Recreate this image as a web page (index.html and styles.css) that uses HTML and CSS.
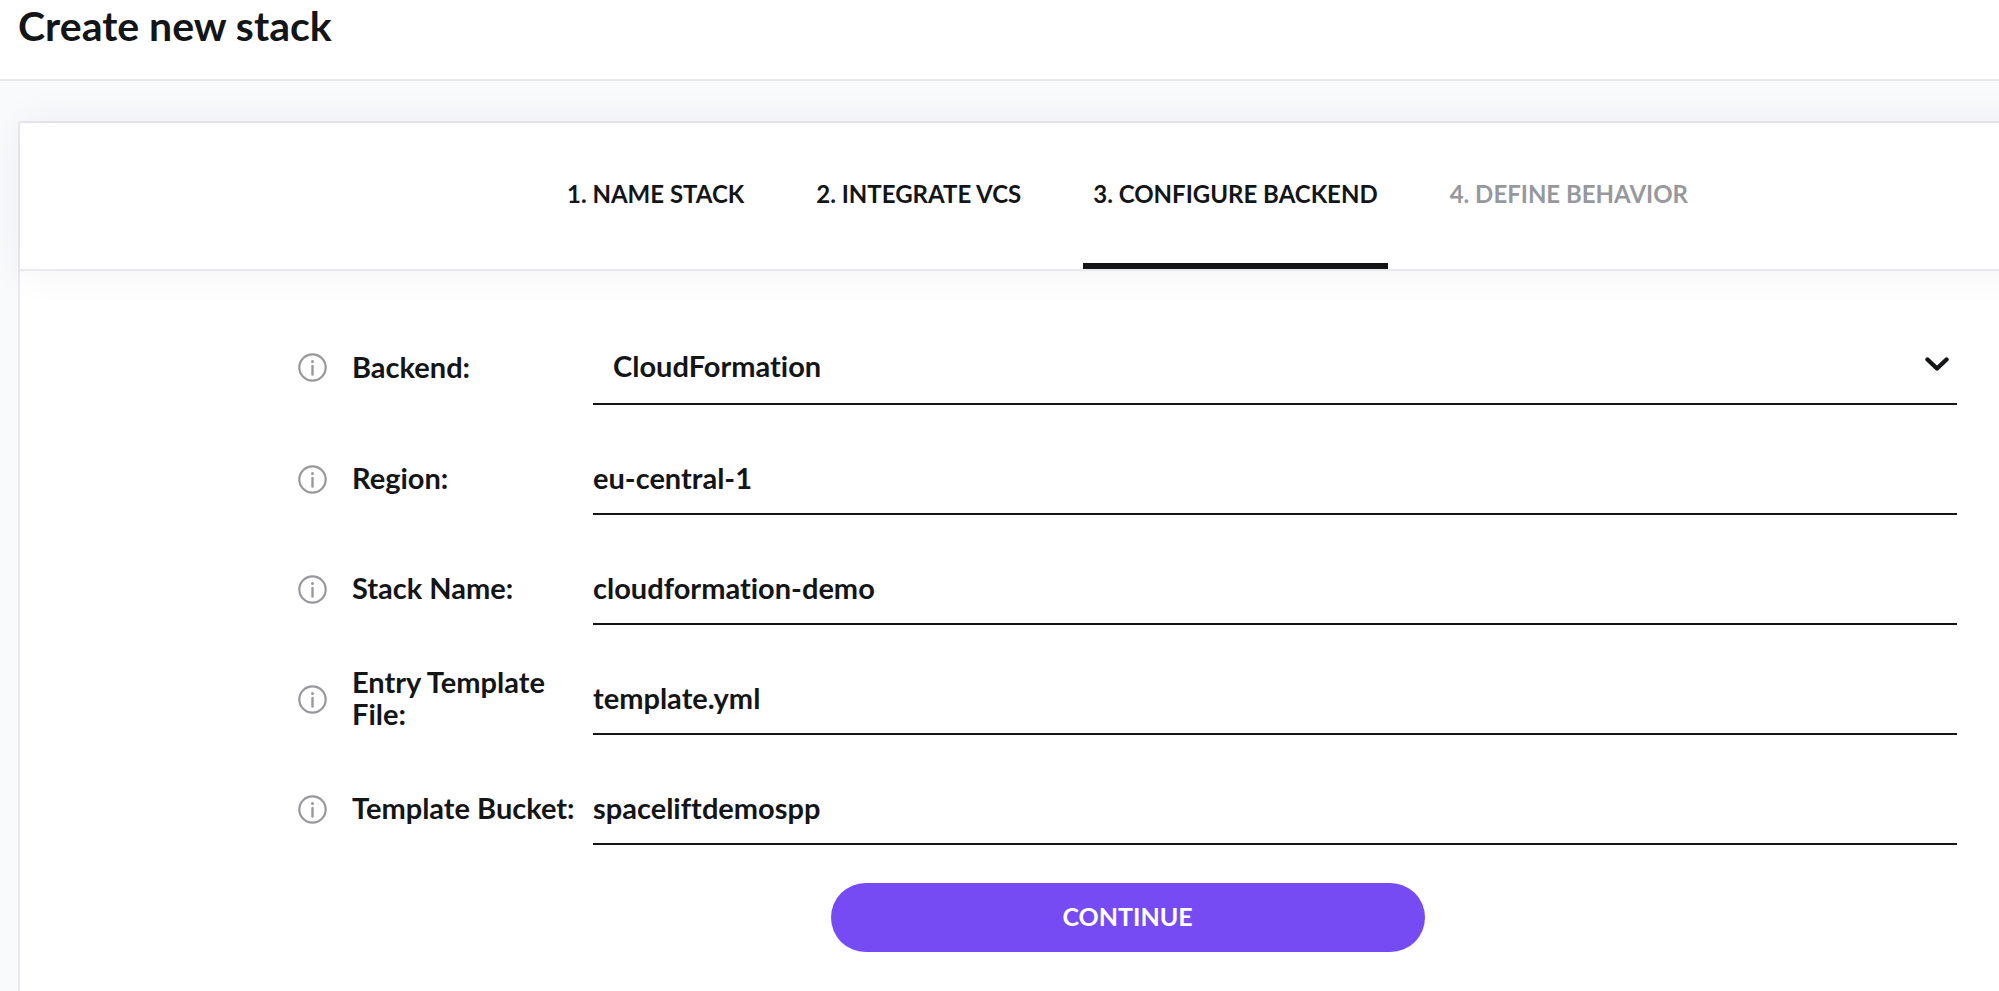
FILE: index.html
```html
<!DOCTYPE html>
<html lang="en">
<head>
  <meta charset="UTF-8">
  <meta name="viewport" content="width=device-width, initial-scale=1.0">
  <title>Create new stack</title>
  <link rel="stylesheet" href="styles.css">
</head>
<body>
  <svg class="sprite" aria-hidden="true">
    <symbol id="icon-info" viewBox="0 0 29 29">
      <circle cx="14.5" cy="14.5" r="13.2" fill="none" stroke="currentColor" stroke-width="2.2"/>
      <circle cx="14.5" cy="8.5" r="1.5" fill="currentColor"/>
      <path d="M14.5 13v8.5" stroke="currentColor" stroke-width="2.4" stroke-linecap="round"/>
    </symbol>
  </svg>
  <header class="page-header">
    <h1>Create new stack</h1>
  </header>
  <main class="card">
    <nav class="steps">
      <a class="step" href="#name">1. NAME STACK</a>
      <a class="step" href="#vcs">2. INTEGRATE VCS</a>
      <a class="step active" href="#backend" aria-current="step">3. CONFIGURE BACKEND</a>
      <a class="step disabled" href="#behavior">4. DEFINE BEHAVIOR</a>
    </nav>
    <form class="stack-form">
      <div class="row">
        <div class="row-label">
          <svg class="info"><use href="#icon-info"/></svg>
          <label for="vendor">Backend:</label>
        </div>
        <div class="select">
          <select id="vendor">
            <option>CloudFormation</option>
            <option>Terraform</option>
            <option>Pulumi</option>
          </select>
          <svg class="chevron" viewBox="0 0 24 14"><path d="M2.5 2.5L12 11.5L21.5 2.5" fill="none" stroke="currentColor" stroke-width="4.4" stroke-linecap="round" stroke-linejoin="round"/></svg>
        </div>
      </div>
      <div class="row">
        <div class="row-label">
          <svg class="info"><use href="#icon-info"/></svg>
          <label for="region">Region:</label>
        </div>
        <input type="text" id="region" value="eu-central-1">
      </div>
      <div class="row">
        <div class="row-label">
          <svg class="info"><use href="#icon-info"/></svg>
          <label for="stack-name">Stack Name:</label>
        </div>
        <input type="text" id="stack-name" value="cloudformation-demo">
      </div>
      <div class="row">
        <div class="row-label">
          <svg class="info"><use href="#icon-info"/></svg>
          <label for="template-file">Entry Template File:</label>
        </div>
        <input type="text" id="template-file" value="template.yml">
      </div>
      <div class="row">
        <div class="row-label">
          <svg class="info"><use href="#icon-info"/></svg>
          <label for="bucket">Template Bucket:</label>
        </div>
        <input type="text" id="bucket" value="spaceliftdemospp">
      </div>
      <button type="button" class="continue">CONTINUE</button>
    </form>
  </main>
</body>
</html>
```
FILE: styles.css
```css
* {
  box-sizing: border-box;
}
body {
  margin: 0;
  min-height: 100vh;
  display: flex;
  flex-direction: column;
  overflow-x: hidden;
  background: #f9fafc;
  color: #131517;
  font-family: Lato, "Open Sans", sans-serif;
  font-weight: 700;
  font-variant-ligatures: none;
}
.sprite {
  display: none;
}
.page-header {
  position: relative;
  z-index: 1;
  padding: 0 18px 27px;
  background: #fff;
  border-bottom: 2px solid #e8e8eb;
}
.page-header h1 {
  margin: 0;
  font-size: 41px;
  line-height: 52px;
}
/* the card runs out under the right edge of the window */
.card {
  flex: 1;
  margin: 40px -40px 0 18px;
  background: #fff;
  border: 2px solid #e8e8ed;
  border-bottom: 0;
  border-top-left-radius: 4px;
}
.steps {
  display: flex;
  justify-content: center;
  gap: 52px;
  padding: 0 80px 0 278px;
  border-bottom: 2px solid #e8e8ed;
  box-shadow: 0 0 40px rgba(31, 34, 71, 0.06);
}
.step {
  padding: 55px 10px 53px;
  border-bottom: 6px solid transparent;
  color: inherit;
  font-size: 24px;
  line-height: 32px;
  text-decoration: none;
  white-space: nowrap;
}
.step.active {
  border-bottom-color: #131517;
}
.step.disabled {
  color: #97989d;
}
.stack-form {
  display: flex;
  flex-direction: column;
  gap: 38px;
  padding: 59px 80px 38px 278px;
}
.row {
  display: flex;
  align-items: center;
}
.row-label {
  flex: 0 0 295px;
  display: flex;
  align-items: center;
  gap: 25px;
  font-size: 29px;
  line-height: 32px;
}
.row-label label {
  padding: 0 12px 2px 0;
}
.info {
  flex: none;
  width: 29px;
  height: 29px;
  color: #97989d;
}
.select {
  position: relative;
  flex: 1;
}
input,
select {
  flex: 1;
  min-width: 0;
  width: 100%;
  height: 72px;
  padding: 0 0 2px;
  border: 0;
  border-bottom: 2px solid #131517;
  border-radius: 0;
  outline: 0;
  background: transparent;
  color: inherit;
  font: inherit;
  font-size: 29px;
  font-variant-ligatures: none;
}
select {
  display: block;
  height: 75px;
  padding: 0 60px 2px 20px;
  appearance: none;
}
.chevron {
  position: absolute;
  top: 27px;
  right: 8px;
  width: 24px;
  height: 14px;
  pointer-events: none;
}
.continue {
  align-self: center;
  width: 594px;
  height: 69px;
  padding: 0 0 4px;
  border: 0;
  border-radius: 35px;
  background: #774bf4;
  color: #fff;
  font: inherit;
  font-size: 25px;
  cursor: pointer;
}
.continue:hover {
  background: #6a3de8;
}
```
